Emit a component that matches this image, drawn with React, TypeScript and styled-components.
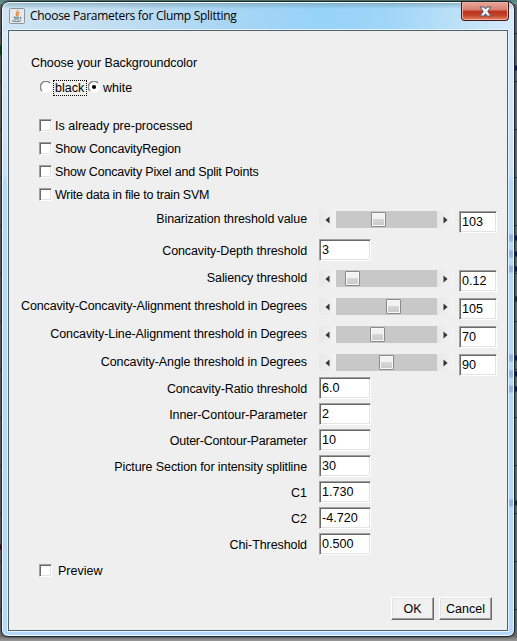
import React from 'react';
import styled, { createGlobalStyle } from 'styled-components';

const GlobalStyle = createGlobalStyle`
  * { box-sizing: border-box; }
  body { margin: 0; overflow: hidden; font: 12.5px/16px "Liberation Sans", Arial, sans-serif; color: #000; }
`;

const Desktop = styled.div`
  position: relative;
  width: 517px;
  height: 641px;
  padding: 1px 2px 3px 1px;
  background:
    linear-gradient(#5c8582, #6d9591) 0 0 / 517px 4px no-repeat,
    linear-gradient(#777, #999) 0 637px / 517px 4px no-repeat,
    repeating-linear-gradient(#6b6b6b 0 33px, #303030 33px 34px, #6b6b6b 34px 48px);
`;
const EdgeMarks = styled.svg`
  position: absolute;
  inset: 0;
  pointer-events: none;
`;
const Frame = styled.section`
  width: 514px;
  height: 636px;
  padding: 0 6px 5px;
  border: 1px solid #1d2932;
  border-radius: 8px 8px 7px 7px;
  box-shadow: inset 0 0 0 1px #eefaff, 0 0 2px #222;
  background:
    linear-gradient(#6e9aac99 0, transparent 6px) 0 1px / 100% 7px no-repeat,
    linear-gradient(90deg, #cfe5f5 0, #c2def2 22%, #a8d5f5 45%, #96d3f8 62%, #9fd5f8 75%, #c3e3f8 92%, #d5ebfa 100%) 0 0 / 100% 29px no-repeat,
    linear-gradient(#dcebf8 0, #c9e0f5 170px, #b5d7fa 180px, #b5d7fa 100%);
`;
const TitleBar = styled.header`
  display: flex;
  height: 28px;
  padding-left: 1px;
`;
const JavaIcon = styled.svg`
  margin-top: 6px;
  flex: none;
`;
const Title = styled.h1`
  flex: 1;
  margin: 5px 0 0 5px;
  font: 12px/18px "Open Sans", "Noto Sans", sans-serif;
  letter-spacing: -0.29px;
  white-space: nowrap;
`;
const CloseButton = styled.button`
  width: 48px;
  height: 19px;
  margin-right: -1px;
  padding: 0;
  display: grid;
  place-items: center;
  border: 1px solid #4b1511;
  border-top: 0;
  border-radius: 0 0 4px 4px;
  box-shadow: inset 0 0 0 1px #f1aa9c;
  background: linear-gradient(#e9a99c 0, #d67f70 45%, #bd321d 50%, #c2452b 75%, #e78466 100%);
`;
const Client = styled.main`
  height: 601px;
  border: 1px solid #50606d;
  outline: 1px solid #e4f4ff;
  background: #efefef;
  padding: 24px 11px 0 22px;
  display: flex;
  flex-direction: column;
`;
const Text = styled.span<{ $spacing?: number }>`
  white-space: nowrap;
  letter-spacing: ${(p) => p.$spacing ?? 0}px;
`;
const RadioRow = styled.div`
  display: flex;
  align-items: center;
  height: 16px;
  margin: 9px 0 0 9px;
  & > svg { margin-bottom: 2px; }
`;
const RadioText = styled.span<{ $focused?: boolean }>`
  height: 16px;
  line-height: 15px;
  width: ${(p) => (p.$focused ? '34px' : 'auto')};
  margin: 0 1px;
  padding: 0 1px;
  border: 1px ${(p) => (p.$focused ? 'dotted #000' : 'solid transparent')};
`;
const CheckList = styled.div`
  display: flex;
  flex-direction: column;
  gap: 7px;
  margin-top: 22px;
`;
const CheckRow = styled.label<{ $gap?: number }>`
  display: flex;
  align-items: center;
  height: 16px;
  padding-left: 8px;
  gap: ${(p) => p.$gap ?? 3}px;
`;
const sunken = `
  border: 1px solid;
  border-color: #a0a0a0 #fff #fff #a0a0a0;
  box-shadow: inset 1px 1px #696969, inset -1px -1px #e3e3e3;
  background: #fff;
`;
const CheckBox = styled.i`
  width: 13px;
  height: 13px;
  margin-bottom: 1px;
  ${sunken}
`;
const Parameters = styled.div`
  margin-top: 8px;
  margin-left: -22px;
`;
const Row = styled.div<{ $height: number }>`
  display: grid;
  grid-template-columns: 298px 134px 37px;
  column-gap: 12px;
  height: ${(p) => p.$height}px;
  align-items: start;
  & > :nth-child(3) { margin-left: -6px; }
`;
const RowLabel = styled.div<{ $top: number }>`
  justify-self: end;
  margin-top: ${(p) => p.$top}px;
`;
const Field = styled.div<{ $width: number }>`
  width: ${(p) => p.$width}px;
  height: 22px;
  padding: 2px 0 0 2px;
  font-size: 12.6px;
  ${sunken}
`;
const Slider = styled.div`
  display: flex;
  width: 135px;
  height: 17px;
`;
const Arrow = styled.span`
  width: 17px;
  height: 17px;
  display: grid;
  place-items: center;
  background: linear-gradient(90deg, #e8e8e8, #f3f3f3);
`;
const Track = styled.div<{ $offset: number }>`
  width: 101px;
  height: 17px;
  padding: 1px 0 0 ${(p) => p.$offset}px;
  background: #c8c8c8;
`;
const Thumb = styled.div`
  width: 15px;
  height: 15px;
  border: 1px solid #8a8a8a;
  border-radius: 1px;
  box-shadow: inset 0 0 0 1px #f8f8f8;
  background: linear-gradient(#f2f2f2 0 45%, #d6d6d6 50%, #c9c9cc);
`;
const Footer = styled.footer`
  display: flex;
  justify-content: flex-end;
  gap: 5px;
  margin: 18px 4px 0 0;
`;
const PushButton = styled.button<{ $width: number }>`
  width: ${(p) => p.$width}px;
  height: 23px;
  padding: 0;
  font: inherit;
  color: #000;
  background: #f0f0f0;
  border: 1px solid;
  border-color: #fff #696969 #696969 #fff;
  box-shadow: inset -1px -1px #a0a0a0, inset 1px 1px #e3e3e3;
`;

function Radio({ checked }: { checked?: boolean }) {
  return (
    <svg width="12" height="12" viewBox="0 0 12 12">
      <circle cx="6" cy="6" r="5" fill="#fff" />
      <path d="M2 10A5.5 5.5 0 0 1 10 2" fill="none" stroke="#858585" strokeWidth="1.4" />
      <path d="M2 10A5.5 5.5 0 0 0 10 2" fill="none" stroke="#fff" strokeWidth="1" />
      {checked && <circle cx="6" cy="6" r="2.1" fill="#000" />}
    </svg>
  );
}

function ScrollArrow({ right }: { right?: boolean }) {
  return (
    <Arrow>
      <svg width="5" height="8" viewBox="0 0 5 8">
        <path d={right ? 'M0.5 0.5 4.5 4 0.5 7.5Z' : 'M4.5 0.5 0.5 4 4.5 7.5Z'} fill="#333" />
      </svg>
    </Arrow>
  );
}

const checks = [
  { text: 'Is already pre-processed', spacing: 0 },
  { text: 'Show ConcavityRegion', spacing: -0.17 },
  { text: 'Show Concavity Pixel and Split Points', spacing: -0.19 },
  { text: 'Write data in file to train SVM', spacing: -0.24 },
];

type Param = { text: string; value: string; height: number; offset?: number; spacing?: number };
const params: Param[] = [
  { text: 'Binarization threshold value', value: '103', height: 28, offset: 35, spacing: -0.1 },
  { text: 'Concavity-Depth threshold', value: '3', height: 31, spacing: -0.1 },
  { text: 'Saliency threshold', value: '0.12', height: 28, offset: 9, spacing: -0.11 },
  { text: 'Concavity-Concavity-Alignment threshold in Degrees', value: '105', height: 28, offset: 50, spacing: -0.13 },
  { text: 'Concavity-Line-Alignment threshold in Degrees', value: '70', height: 28, offset: 34, spacing: -0.1 },
  { text: 'Concavity-Angle threshold in Degrees', value: '90', height: 23, offset: 43, spacing: -0.1 },
  { text: 'Concavity-Ratio threshold', value: '6.0', height: 26, spacing: -0.12 },
  { text: 'Inner-Contour-Parameter', value: '2', height: 26, spacing: -0.08 },
  { text: 'Outer-Contour-Parameter', value: '10', height: 26, spacing: -0.22 },
  { text: 'Picture Section for intensity splitline', value: '30', height: 26, spacing: -0.1 },
  { text: 'C1', value: '1.730', height: 26 },
  { text: 'C2', value: '-4.720', height: 26 },
  { text: 'Chi-Threshold', value: '0.500', height: 30, spacing: -0.08 },
];

export default function App() {
  return (
    <>
      <GlobalStyle />
      <Desktop>
        <Frame>
          <TitleBar>
            <JavaIcon width="16" height="16" viewBox="0 0 16 16">
              <rect x=".5" y=".5" width="15" height="15" rx="1" fill="#e8e9e9" stroke="#8d959b" />
              <path d="M8.8 2C9.5 4 5.5 5 7.7 8M10.5 4.2C7.7 5.7 10 6.5 8.6 8" fill="none" stroke="#e47a2e" strokeWidth="1.2" />
              <path d="M4.5 9.2H10M5 11H10M3 12.8Q7.5 14.3 12 12.8M10.8 9.3Q13.5 9.2 11 11.2" fill="none" stroke="#567088" />
            </JavaIcon>
            <Title>Choose Parameters for Clump Splitting</Title>
            <CloseButton aria-label="Close">
              <svg width="13" height="11" viewBox="0 0 13 11">
                <path d="M1 1H5L6.5 3 8 1H12L8.8 5.4 12 10H8L6.5 7.8 5 10H1L4.2 5.4Z" fill="#f5f5f5" stroke="#545866" />
              </svg>
            </CloseButton>
          </TitleBar>
          <Client>
            <Text $spacing={-0.08}>Choose your Backgroundcolor</Text>
            <RadioRow>
              <Radio />
              <RadioText $focused>black</RadioText>
              <Radio checked />
              <RadioText>white</RadioText>
            </RadioRow>
            <CheckList>
              {checks.map((c) => (
                <CheckRow key={c.text}>
                  <CheckBox />
                  <Text $spacing={c.spacing}>{c.text}</Text>
                </CheckRow>
              ))}
            </CheckList>
            <Parameters>
              {params.map((p) => (
                <Row key={p.text} $height={p.height}>
                  <RowLabel $top={p.offset === undefined ? 4 : 0}>
                    <Text $spacing={p.spacing}>{p.text}</Text>
                  </RowLabel>
                  {p.offset === undefined ? (
                    <Field $width={52}>{p.value}</Field>
                  ) : (
                    <>
                      <Slider>
                        <ScrollArrow />
                        <Track $offset={p.offset}><Thumb /></Track>
                        <ScrollArrow right />
                      </Slider>
                      <Field $width={38}>{p.value}</Field>
                    </>
                  )}
                </Row>
              ))}
            </Parameters>
            <CheckRow $gap={6}>
              <CheckBox />
              <Text>Preview</Text>
            </CheckRow>
            <Footer>
              <PushButton $width={43}>OK</PushButton>
              <PushButton $width={53}>Cancel</PushButton>
            </Footer>
          </Client>
        </Frame>
        <EdgeMarks width="517" height="641" viewBox="0 0 517 641">
          <path d="M515 68h2M515 238h2M515 254h2M515 269h2M515 358h2M515 374h2M515 389h2" stroke="#10105e" strokeWidth="5" />
          <path d="M515 299h2M515 503h2" stroke="#222" strokeWidth="5" />
          <path d="M509 238h4M509 254h4M509 269h4M509 358h4M509 374h4M509 389h4M509 503h4" stroke="#6f93cc" strokeWidth="7" opacity=".5" />
          <path d="M0 50h1" stroke="#073f13" strokeWidth="10" />
          <path d="M0 547h1" stroke="#30001e" strokeWidth="5" />
        </EdgeMarks>
      </Desktop>
    </>
  );
}
